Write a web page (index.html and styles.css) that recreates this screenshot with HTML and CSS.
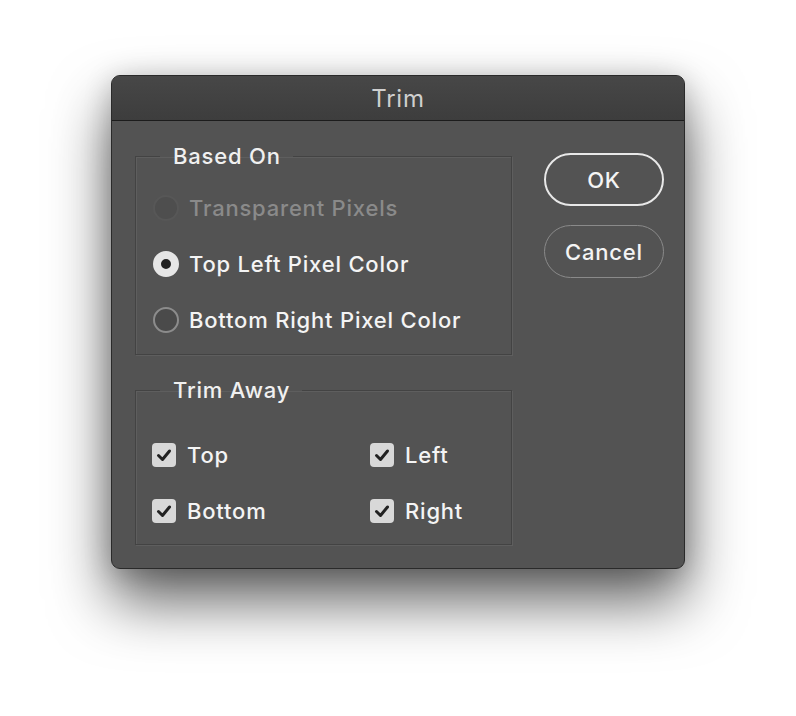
FILE: index.html
```
<!DOCTYPE html>
<html>
<head>
<meta charset="utf-8">
<link rel="stylesheet" href="styles.css">
</head>
<body>
<div class="dialog">
  <div class="titlebar">Trim</div>
  <div class="content">
    <div class="left">
      <fieldset class="group based">
        <legend>Based On</legend>
        <div class="inner">
          <label class="opt disabled"><span class="radio"></span>Transparent Pixels</label>
          <label class="opt"><span class="radio on"></span>Top Left Pixel Color</label>
          <label class="opt"><span class="radio"></span>Bottom Right Pixel Color</label>
        </div>
      </fieldset>
      <fieldset class="group trim">
        <legend>Trim Away</legend>
        <div class="grid">
          <label class="chk"><span class="box"><svg viewBox="0 0 24 24" width="24" height="24"><path d="M6.5 12.5 L10.5 16.5 L17.5 8" fill="none" stroke="#222" stroke-width="3" stroke-linecap="round" stroke-linejoin="round"/></svg></span>Top</label>
          <label class="chk"><span class="box"><svg viewBox="0 0 24 24" width="24" height="24"><path d="M6.5 12.5 L10.5 16.5 L17.5 8" fill="none" stroke="#222" stroke-width="3" stroke-linecap="round" stroke-linejoin="round"/></svg></span>Left</label>
          <label class="chk"><span class="box"><svg viewBox="0 0 24 24" width="24" height="24"><path d="M6.5 12.5 L10.5 16.5 L17.5 8" fill="none" stroke="#222" stroke-width="3" stroke-linecap="round" stroke-linejoin="round"/></svg></span>Bottom</label>
          <label class="chk"><span class="box"><svg viewBox="0 0 24 24" width="24" height="24"><path d="M6.5 12.5 L10.5 16.5 L17.5 8" fill="none" stroke="#222" stroke-width="3" stroke-linecap="round" stroke-linejoin="round"/></svg></span>Right</label>
        </div>
      </fieldset>
    </div>
    <div class="buttons">
      <button class="btn ok">OK</button>
      <button class="btn cancel">Cancel</button>
    </div>
  </div>
</div>
</body>
</html>
```
FILE: styles.css
```
html, body {
  margin: 0;
  padding: 0;
  background: #ffffff;
}
body {
  width: 796px;
  height: 716px;
  overflow: hidden;
  font-family: Inter, "Liberation Sans", Arial, sans-serif;
  font-weight: 500;
}
.dialog {
  margin: 75px 0 0 111px;
  width: 572px;
  height: 492px;
  background: #535353;
  border: 1px solid #2a2a2a;
  border-radius: 9px;
  box-shadow: 0 32px 60px rgba(0,0,0,0.62), 0 4px 28px rgba(0,0,0,0.2);
  overflow: hidden;
  display: flex;
  flex-direction: column;
}
.titlebar {
  height: 43px;
  background: linear-gradient(#474747, #3d3d3d);
  border-bottom: 1px solid #1c1c1c;
  color: #cfcfcf;
  font-size: 24px;
  letter-spacing: 0.8px;
  font-weight: 400;
  display: flex;
  align-items: center;
  justify-content: center;
  padding-top: 1px;
}
.content {
  display: flex;
  padding: 24px 0 0 23px;
  gap: 32px;
}
.left {
  display: flex;
  flex-direction: column;
  gap: 24px;
}
.group {
  margin: 0;
  width: 377px;
  border: 1px solid #434343;
  box-shadow: 1px 1px 0 #5e5e5e, inset 1px 1px 0 #5e5e5e;
  padding: 0;
  box-sizing: border-box;
}
.group legend {
  margin-left: 24px;
  padding: 0 12px 0 13px;
  color: #f0f0f0;
  font-size: 22px;
  letter-spacing: 0.8px;
  line-height: 22px;
}
.based {
  height: 210px;
}
.inner {
  padding: 13px 0 0 17px;
}
.opt {
  display: flex;
  align-items: center;
  height: 56px;
  color: #f4f4f4;
  font-size: 22px;
  letter-spacing: 0.8px;
}
.opt.disabled {
  color: #8a8a8a;
}
.radio {
  width: 26px;
  height: 26px;
  border-radius: 50%;
  border: 2px solid #8c8c8c;
  background: #4a4a4a;
  margin-right: 10px;
  box-sizing: border-box;
  flex: none;
}
.disabled .radio {
  border-color: #575757;
  background: #4e4e4e;
}
.radio.on {
  border: 8px solid #e6e6e6;
  background: #222;
}
.trim {
  height: 166px;
}
.grid {
  display: grid;
  grid-template-columns: 218px 120px;
  grid-auto-rows: 56px;
  padding: 26px 0 0 16px;
}
.chk {
  display: flex;
  align-items: center;
  color: #f4f4f4;
  font-size: 22px;
  letter-spacing: 0.8px;
}
.box {
  width: 24px;
  height: 24px;
  border-radius: 4px;
  background: #d8d8d8;
  margin-right: 11px;
  display: flex;
  flex: none;
}
.buttons {
  display: flex;
  flex-direction: column;
  gap: 19px;
  padding-top: 8px;
}
.btn {
  width: 120px;
  height: 53px;
  border-radius: 27px;
  background: #535353;
  color: #f4f4f4;
  font-family: Inter, "Liberation Sans", Arial, sans-serif;
  font-weight: 500;
  font-size: 22px;
  letter-spacing: 0.8px;
  padding: 0;
  box-sizing: border-box;
}
.btn.ok {
  border: 2px solid #e8e8e8;
}
.btn.cancel {
  border: 1px solid #8a8a8a;
}
```
